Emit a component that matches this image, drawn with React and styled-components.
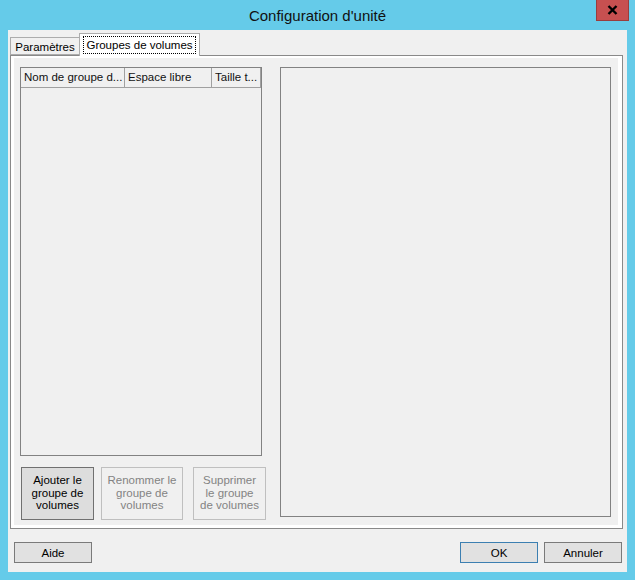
import React from 'react'
import styled, { createGlobalStyle } from 'styled-components'

const GlobalStyle = createGlobalStyle`
    html, body {
        margin: 0;
        padding: 0;
        background: #65cbe9;
    }
    * {
        box-sizing: border-box;
    }
`

function App() {
    return (
        <Window>
            <GlobalStyle />
            <TitleBar>
                <Title>Configuration d'unité</Title>
                <CloseBtn>
                    <svg width="11" height="10" viewBox="0 0 11 10">
                        <path d="M1.5 1 L9.5 9 M9.5 1 L1.5 9" stroke="#000" strokeWidth="2.4" />
                    </svg>
                </CloseBtn>
            </TitleBar>

            <Body>
                <TabStrip>
                    <Tab>Paramètres</Tab>
                    <Tab $active>
                        <Focus>Groupes de volumes</Focus>
                    </Tab>
                </TabStrip>

                <TabPanel>
                    <Page>
                        <LeftCol>
                            <ListView>
                                <Header>
                                    <Column $w={104}>Nom de groupe d...</Column>
                                    <Column $w={87}>Espace libre</Column>
                                    <Column $w={49}>Taille t...</Column>
                                </Header>
                            </ListView>
                            <ActionRow>
                                <ActionBtn $w={73}>Ajouter le<br />groupe de<br />volumes</ActionBtn>
                                <ActionBtn $w={82} $ml={7} disabled>Renommer le<br />groupe de<br />volumes</ActionBtn>
                                <ActionBtn $w={73} $ml={10} disabled>Supprimer<br />le groupe<br />de volumes</ActionBtn>
                            </ActionRow>
                        </LeftCol>
                        <DetailPane />
                    </Page>
                </TabPanel>

                <Footer>
                    <DlgBtn>Aide</DlgBtn>
                    <Spacer />
                    <DlgBtn $primary>OK</DlgBtn>
                    <DlgBtn>Annuler</DlgBtn>
                </Footer>
            </Body>
        </Window>
    )
}

const Window = styled.div`
    width: 635px;
    height: 580px;
    background: #65cbe9;
    display: flex;
    flex-direction: column;
    font-family: "Liberation Sans", Arial, sans-serif;
    font-size: 11.5px;
    color: #000;
`

const TitleBar = styled.div`
    height: 30px;
    position: relative;
    display: flex;
    align-items: center;
    justify-content: center;
`

const Title = styled.div`
    font-size: 15px;
    color: #111;
    margin-top: 1px;
`

const CloseBtn = styled.div`
    position: absolute;
    top: 0;
    right: 6px;
    width: 33px;
    height: 21px;
    background: #c75050;
    border: 1px solid #9a3d3d;
    border-top: none;
    display: flex;
    align-items: center;
    justify-content: center;
`

const Body = styled.div`
    flex: 1;
    margin: 0 8px 8px 8px;
    background: #f0f0f0;
    display: flex;
    flex-direction: column;
    padding: 3px 5px 0 2px;
`

const TabStrip = styled.div`
    display: flex;
    align-items: flex-end;
    height: 22px;
    position: relative;
    z-index: 1;
`

const Tab = styled.div`
    height: ${p => (p.$active ? '23px' : '18px')};
    width: ${p => (p.$active ? '121px' : '70px')};
    margin-left: ${p => (p.$active ? '-1px' : '0')};
    margin-bottom: ${p => (p.$active ? '-1px' : '0')};
    border: 1px solid #acacac;
    border-bottom: ${p => (p.$active ? 'none' : '1px solid #acacac')};
    background: ${p => (p.$active ? '#ffffff' : '#f0f0f0')};
    display: flex;
    align-items: center;
    justify-content: center;
    padding: ${p => (p.$active ? '2px 3px 2px 3px' : '1px 0 0 0')};
    white-space: nowrap;
`

const Focus = styled.div`
    width: 100%;
    height: 18px;
    border: 1px dotted #000;
    display: flex;
    align-items: center;
    justify-content: center;
`

const TabPanel = styled.div`
    width: 613px;
    height: 474px;
    border: 1px solid #898989;
    background: #ffffff;
    padding: 2px 4px 3px 3px;
`

const Page = styled.div`
    height: 100%;
    background: #f0f0f0;
    display: flex;
    padding: 9px 8px 9px 6px;
`

const LeftCol = styled.div`
    width: 260px;
    flex-shrink: 0;
    display: flex;
    flex-direction: column;
`

const ListView = styled.div`
    width: 242px;
    height: 389px;
    flex-shrink: 0;
    border: 1px solid #828282;
    background: #f0f0f0;
`

const Header = styled.div`
    display: flex;
    height: 20px;
    border-bottom: 1px solid #a0a0a0;
`

const Column = styled.div`
    width: ${p => p.$w}px;
    border-right: 1px solid #a0a0a0;
    padding: 3px 0 0 3px;
    white-space: nowrap;
    overflow: hidden;
    color: #111;
`

const ActionRow = styled.div`
    display: flex;
    flex-shrink: 0;
    margin-top: 11px;
    padding-left: 1px;
`

const ActionBtn = styled.div`
    width: ${p => p.$w}px;
    margin-left: ${p => p.$ml || 0}px;
    height: 53px;
    border: 1px solid ${p => (p.disabled ? '#bfbfbf' : '#707070')};
    background: ${p => (p.disabled ? '#f0f0f0' : '#dddddd')};
    color: ${p => (p.disabled ? '#838383' : '#000')};
    text-align: center;
    line-height: 12.5px;
    padding-top: 6px;
    white-space: nowrap;
`

const DetailPane = styled.div`
    width: 331px;
    flex-shrink: 0;
    border: 1px solid #828282;
    background: #f0f0f0;
    height: 450px;
`

const Footer = styled.div`
    display: flex;
    margin-top: 13px;
    padding-left: 4px;
    gap: 6px;
`

const Spacer = styled.div`
    flex: 1;
`

const DlgBtn = styled.div`
    width: 78px;
    height: 21px;
    border: 1px solid ${p => (p.$primary ? '#3c7fb1' : '#7a7a7a')};
    background: #e1e1e1;
    display: flex;
    align-items: center;
    justify-content: center;
    padding-top: 1px;
`

export default App
